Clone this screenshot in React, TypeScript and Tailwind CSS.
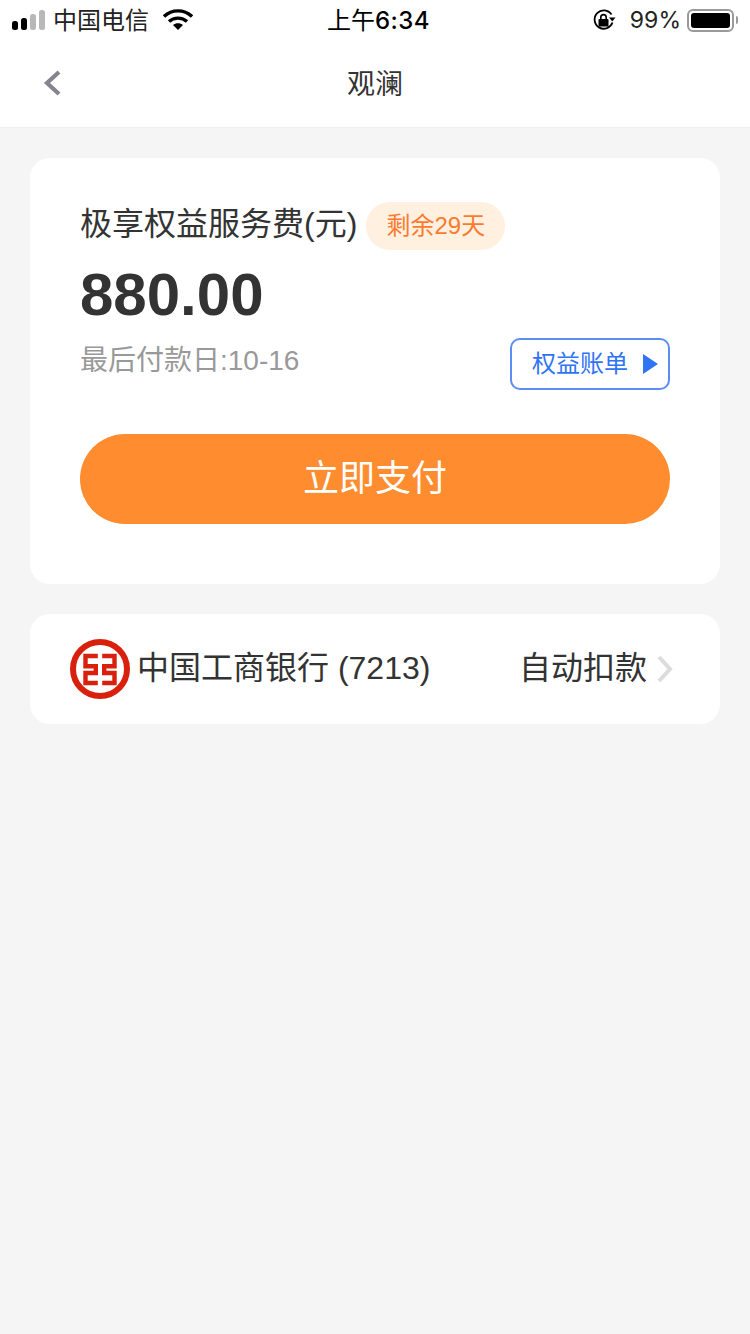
const cjk = "font-['Liberation_Sans','Noto_Sans_CJK_SC',sans-serif]";

function Signal() {
  return (
    <svg width="34" height="20" viewBox="0 0 34 20">
      <rect x="0" y="11" width="6" height="9" rx="2.5" fill="#000" />
      <rect x="9" y="8" width="6" height="12" rx="2.5" fill="#000" />
      <rect x="18" y="4" width="6" height="16" rx="2.5" fill="#b8b8b8" />
      <rect x="27" y="0" width="6" height="20" rx="2.5" fill="#b8b8b8" />
    </svg>
  );
}

function Wifi() {
  return (
    <svg width="30" height="22" viewBox="0 0 30 22">
      <path d="M1 7.5 C9 0 21 0 29 7.5" fill="none" stroke="#000" strokeWidth="3.4" />
      <path d="M6 12.5 C11 8 19 8 24 12.5" fill="none" stroke="#000" strokeWidth="3.4" />
      <path d="M10 16 C13 13.6 17 13.6 20 16 L15 21 Z" fill="#000" />
    </svg>
  );
}

function RotationLock() {
  return (
    <svg width="24" height="24" viewBox="0 0 24 24">
      <path d="M20.5 14.5 A9.2 9.2 0 1 1 19.5 6.5" fill="none" stroke="#000" strokeWidth="1.8" />
      <path d="M17 9.5 L23.5 9.5 L20.3 13.5 Z" fill="#000" />
      <rect x="6.5" y="11" width="10" height="7.5" rx="1" fill="#000" />
      <path d="M8.8 11.5 V9.3 A2.7 2.7 0 0 1 14.2 9.3 V11.5" fill="none" stroke="#000" strokeWidth="1.6" />
    </svg>
  );
}

function Battery() {
  return (
    <div className="flex items-center">
      <div className="flex h-[23px] w-[47px] items-center rounded-[6px] border-2 border-[#9a9a9a] p-[2px]">
        <div className="h-full w-full rounded-[3px] bg-black" />
      </div>
      <div className="ml-[2px] h-[8px] w-[2px] rounded-r-sm bg-[#9a9a9a]" />
    </div>
  );
}

function IcbcLogo() {
  return (
    <svg width="60" height="60" viewBox="0 0 60 60" className="shrink-0">
      <circle cx="30" cy="30" r="27" fill="#fff" stroke="#d9200c" strokeWidth="6" />
      <g fill="none" stroke="#d9200c" strokeWidth="4.4" strokeLinejoin="miter">
        <path d="M27.8 17 H15.5 V27.3 H25.8 V34 H15.5 V44 H27.8" />
        <path d="M32.2 17 H44.5 V27.3 H34.2 V34 H44.5 V44 H32.2" />
      </g>
    </svg>
  );
}

export default function App() {
  return (
    <div className={`flex min-h-[1334px] flex-col bg-[#f5f5f5] ${cjk}`}>
      {/* status bar + nav */}
      <header className="border-b border-[#efefef] bg-white">
        <div className="flex h-[40px] items-center justify-between px-[12px] text-black">
          <div className="flex w-[304px] items-center">
            <Signal />
            <span className="ml-[7px] mt-[2px] text-[24px] leading-none text-[#222]">中国电信</span>
            <span className="ml-[14px]">
              <Wifi />
            </span>
          </div>
          <div className="mt-[1px] flex items-baseline leading-none">
            <span className="text-[24px]">上午</span>
            <span className="font-['Inter',sans-serif] text-[24px] font-medium tracking-[0.5px]">6:34</span>
          </div>
          <div className="flex w-[297px] items-center justify-end">
            <RotationLock />
            <span className="ml-[14px] mt-[1px] font-['Inter',sans-serif] text-[23px] leading-none text-[#222]">99%</span>
            <span className="ml-[6px]">
              <Battery />
            </span>
          </div>
        </div>
        <div className="relative flex h-[87px] items-center justify-center">
          <svg width="20" height="28" viewBox="0 0 20 28" className="absolute left-[42px] top-[29px]">
            <path d="M17 3 L5 14 L17 25" fill="none" stroke="#85858f" strokeWidth="4.2" />
          </svg>
          <h1 className="mt-[3px] text-[28px] font-normal leading-none text-[#333]">观澜</h1>
        </div>
      </header>

      <main className="flex flex-col gap-[30px] px-[30px] pt-[30px]">
        {/* amount card */}
        <section className="h-[426px] rounded-[20px] bg-white px-[50px] pt-[44px]">
          <div className="flex h-[48px] items-center">
            <span className="mb-[4px] text-[32px] leading-none text-[#333]">极享权益服务费(元)</span>
            <span className="ml-[9px] flex h-[48px] w-[139px] items-center justify-center rounded-[24px] bg-[#fff0e0] text-[24px] text-[#ff7a2e]">
              剩余29天
            </span>
          </div>
          <div className="mb-[8px] mt-[9px] text-[60px] font-bold leading-[72px] text-[#333]">880.00</div>
          <div className="flex items-start justify-between">
            <span className="mt-[2px] text-[28px] leading-[40px] text-[#999]">最后付款日:10-16</span>
            <button className="mt-[-1px] flex h-[52px] w-[160px] items-center rounded-[10px] border-2 border-[#5a8ef5] pl-[20px] text-[24px] text-[#2f74f5]">
              权益账单
              <svg width="15" height="20" viewBox="0 0 15 20" className="ml-[15px]">
                <path d="M0 0 L15 10 L0 20 Z" fill="#2f74f5" />
              </svg>
            </button>
          </div>
          <button className="mt-[44px] h-[90px] w-full rounded-[45px] bg-[#ff8c2e] text-[36px] text-white">立即支付</button>
        </section>

        {/* bank card */}
        <section className="flex h-[110px] items-center rounded-[20px] bg-white pl-[40px] pr-[46px]">
          <IcbcLogo />
          <span className="mb-[2px] ml-[7px] text-[32px] leading-none text-[#333]">中国工商银行 (7213)</span>
          <span className="mb-[2px] ml-auto text-[32px] leading-none text-[#333]">自动扣款</span>
          <svg width="18" height="28" viewBox="0 0 18 28" className="ml-[9px] shrink-0">
            <path d="M3 2 L14 14 L3 26" fill="none" stroke="#dcdcdc" strokeWidth="4" />
          </svg>
        </section>
      </main>
    </div>
  );
}
